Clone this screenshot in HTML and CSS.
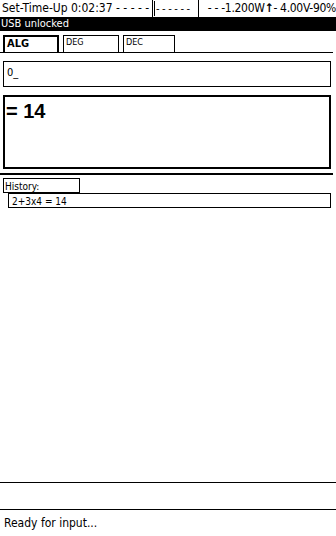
FILE: index.html
```html
<!DOCTYPE html>
<html>
<head>
<meta charset="utf-8">
<link rel="stylesheet" href="styles.css">
</head>
<body>
<div class="screen">
  <div class="status">
    <div class="st-left">Set-Time-Up 0:02:37 - - - - -</div>
    <div class="st-box"><span class="st-bar"></span><span class="st-dash">- - - - - -</span></div>
    <div class="st-right">- - -1.200W<b class="arrow">&#x2191;</b>- 4.00V-90%</div>
  </div>
  <div class="usb">USB unlocked</div>
  <div class="tabs">
    <div class="tab active">ALG</div>
    <div class="tab">DEG</div>
    <div class="tab">DEC</div>
  </div>
  <div class="input">0_</div>
  <div class="result">= 14</div>
  <div class="sep"></div>
  <div class="hist-label">History:</div>
  <div class="hist-item">2+3x4 = 14</div>
  <div class="spacer"></div>
  <div class="line"></div>
  <div class="gap"></div>
  <div class="line"></div>
  <div class="ready">Ready for input...</div>
</div>
</body>
</html>
```
FILE: styles.css
```css
html, body {
  margin: 0;
  padding: 0;
  background: #fff;
}
.screen {
  width: 336px;
  height: 536px;
  display: flex;
  flex-direction: column;
  font-family: "DejaVu Sans Condensed", "DejaVu Sans", sans-serif;
  color: #000;
  overflow: hidden;
}
.status {
  height: 17px;
  display: flex;
  font-size: 12px;
  line-height: 17px;
  white-space: nowrap;
}
.st-left {
  width: 152px;
  padding-left: 2px;
  box-sizing: border-box;
}
.st-box {
  width: 47px;
  height: 17px;
  box-sizing: border-box;
  border-left: 1px solid #000;
  border-right: 1px solid #000;
  display: flex;
  align-items: center;
}
.st-bar {
  flex: none;
  width: 1px;
  height: 15px;
  background: #000;
  margin: 0 1px;
}
.st-dash {
  font-size: 11px;
  letter-spacing: -0.3px;
}
.st-right {
  flex: 1;
  text-align: right;
  letter-spacing: -0.3px;
}
.arrow { font-weight: bold; }
.usb {
  height: 14px;
  background: #000;
  color: #fff;
  font-size: 11px;
  line-height: 14px;
  padding-left: 1px;
}
.tabs {
  display: flex;
  gap: 4px;
  padding: 4px 3px 0 3px;
  height: 17px;
  border-bottom: 1px solid #000;
  margin-right: 3px;
}
.tab {
  width: 56px;
  box-sizing: border-box;
  border: 1px solid #000;
  border-bottom: none;
  font-size: 9px;
  padding: 1px 2px;
}
.tab.active {
  font-weight: bold;
  font-size: 11px;
  border-width: 2px;
  border-bottom: none;
  padding: 0 2px;
}
.tab:nth-child(3) { width: 52px; }
.input {
  margin: 8px 5px 0 3px;
  height: 26px;
  box-sizing: border-box;
  border: 1px solid #000;
  font-size: 11px;
  padding: 4px 3px;
}
.result {
  margin: 8px 5px 0 3px;
  height: 74px;
  box-sizing: border-box;
  border: 2px solid #000;
  font-family: "Liberation Sans", sans-serif;
  font-size: 20px;
  font-weight: bold;
  padding: 2px 0 0 1px;
  line-height: 24px;
}
.sep {
  margin: 4px 3px 0 0;
  height: 2px;
  background: #000;
}
.hist-label {
  margin: 3px 0 0 3px;
  width: 77px;
  height: 15px;
  box-sizing: border-box;
  border: 1px solid #000;
  font-size: 10px;
  line-height: 12px;
  padding: 2px 0 0 1px;
}
.hist-item {
  margin: 0 5px 0 8px;
  height: 15px;
  box-sizing: border-box;
  border: 1px solid #000;
  font-size: 10px;
  line-height: 12px;
  padding: 2px 0 0 3px;
}
.spacer { flex: 1; }
.line {
  height: 1px;
  background: #000;
}
.gap { height: 26px; }
.ready {
  height: 26px;
  font-size: 12px;
  line-height: 26px;
  padding-left: 4px;
}
```
